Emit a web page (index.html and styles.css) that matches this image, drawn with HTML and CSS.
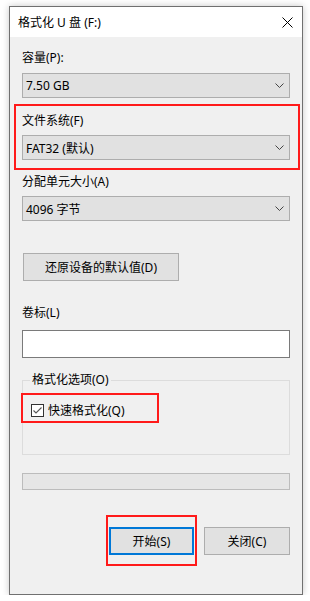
FILE: index.html
```html
<!DOCTYPE html>
<html lang="zh-CN">
<head>
    <meta charset="UTF-8">
    <meta name="viewport" content="width=device-width, initial-scale=1.0">
    <title>格式化 U 盘 (F:)</title>
    <link rel="stylesheet" href="styles.css">
</head>
<body>
    <div class="dialog">
        <div class="title-bar">
            <span class="title">格式化 U 盘 (F:)</span>
            <svg class="close" width="11" height="11" viewBox="0 0 11 11">
                <path d="M0.5 0.5 L10.5 10.5 M10.5 0.5 L0.5 10.5" stroke="#000" stroke-width="1"/>
            </svg>
        </div>
        <div class="dialog-body">
            <label class="field-label">容量(P):</label>
            <div class="combo">
                <span>7.50 GB</span>
                <svg width="9" height="5" viewBox="0 0 9 5"><path d="M0.5 0.5 L4.5 4.5 L8.5 0.5" fill="none" stroke="#444"/></svg>
            </div>

            <div class="highlight section-fs">
                <label class="field-label">文件系统(F)</label>
                <div class="combo">
                    <span>FAT32 (默认)</span>
                    <svg width="9" height="5" viewBox="0 0 9 5"><path d="M0.5 0.5 L4.5 4.5 L8.5 0.5" fill="none" stroke="#444"/></svg>
                </div>
            </div>

            <label class="field-label alloc-label">分配单元大小(A)</label>
            <div class="combo">
                <span>4096 字节</span>
                <svg width="9" height="5" viewBox="0 0 9 5"><path d="M0.5 0.5 L4.5 4.5 L8.5 0.5" fill="none" stroke="#444"/></svg>
            </div>

            <button class="btn restore-btn">还原设备的默认值(D)</button>

            <label class="field-label volume-label">卷标(L)</label>
            <input class="text-input" type="text">

            <fieldset class="group">
                <legend>格式化选项(O)</legend>
                <div class="highlight quick-format">
                    <span class="checkbox">
                        <svg width="11" height="11" viewBox="0 0 11 11"><path d="M1.5 5.5 L4 8 L9.5 2.5" fill="none" stroke="#555" stroke-width="1.1"/></svg>
                    </span>
                    <span>快速格式化(Q)</span>
                </div>
            </fieldset>

            <div class="progress"></div>

            <div class="actions">
                <div class="highlight start-wrap">
                    <button class="btn btn-default">开始(S)</button>
                </div>
                <button class="btn">关闭(C)</button>
            </div>
        </div>
    </div>
</body>
</html>
```

FILE: styles.css
```css
body {
    margin: 0;
    padding: 6px 0 0 9px;
    background: #fff;
    font-family: "Noto Sans", "Noto Sans CJK SC", sans-serif;
    font-size: 12px;
    color: #000;
}
.dialog {
    width: 292px;
    border: 1px solid #707070;
    background: #f0f0f0;
    box-shadow: 0 0 7px rgba(0, 0, 0, 0.22);
}
.title-bar {
    height: 30px;
    background: #fff;
    display: flex;
    align-items: center;
    justify-content: space-between;
    padding: 0 9px 0 8px;
}
.title {
    font-size: 12px;
}
.close {
    margin-top: 0;
}
.dialog-body {
    padding: 13px 12px 28px 12px;
}
.field-label {
    display: block;
    line-height: 16px;
    height: 16px;
}
.combo {
    height: 23px;
    margin-top: 7px;
    border: 1px solid #adadad;
    background: #e1e1e1;
    display: flex;
    align-items: center;
    justify-content: space-between;
    padding: 0 5px 0 3px;
}
.highlight {
    border: 2px solid #ff1a1a;
}
.section-fs {
    margin: 6px -10px 0 -8px;
    padding: 7px 8px 8px 6px;
}
.section-fs .combo {
    margin-top: 6px;
}
.alloc-label {
    margin-top: 4px;
}
.alloc-label + .combo {
    margin-top: 6px;
}
.btn {
    font-family: inherit;
    font-size: 12px;
    color: #000;
    background: #e1e1e1;
    border: 1px solid #adadad;
    height: 28px;
    width: 86px;
    padding: 0;
}
.restore-btn {
    display: block;
    width: 156px;
    margin: 32px 0 0 1px;
}
.volume-label {
    margin-top: 24px;
}
.text-input {
    display: block;
    box-sizing: border-box;
    width: 100%;
    height: 28px;
    margin-top: 9px;
    border: 1px solid #7a7a7a;
    background: #fff;
}
.group {
    margin: 14px 0 0 0;
    padding: 0 7px 31px 7px;
    border: 1px solid #dcdcdc;
}
.group legend {
    padding: 0 2px;
    line-height: 16px;
}
.quick-format {
    width: 123px;
    margin: 5px 0 0 -9px;
    padding: 7px 3px 2px 8px;
    display: flex;
    align-items: center;
    gap: 4px;
    line-height: 17px;
}
.checkbox {
    width: 11px;
    height: 11px;
    border: 1px solid #333;
    background: #fff;
    display: flex;
}
.progress {
    height: 15px;
    margin-top: 18px;
    border: 1px solid #bcbcbc;
    background: #e6e6e6;
}
.actions {
    margin-top: 25px;
    display: flex;
    justify-content: flex-end;
    align-items: center;
    gap: 7px;
}
.start-wrap {
    padding: 10px 1px 9px 1px;
}
.btn-default {
    display: block;
    width: 85px;
    border: 2px solid #0078d7;
}
```
